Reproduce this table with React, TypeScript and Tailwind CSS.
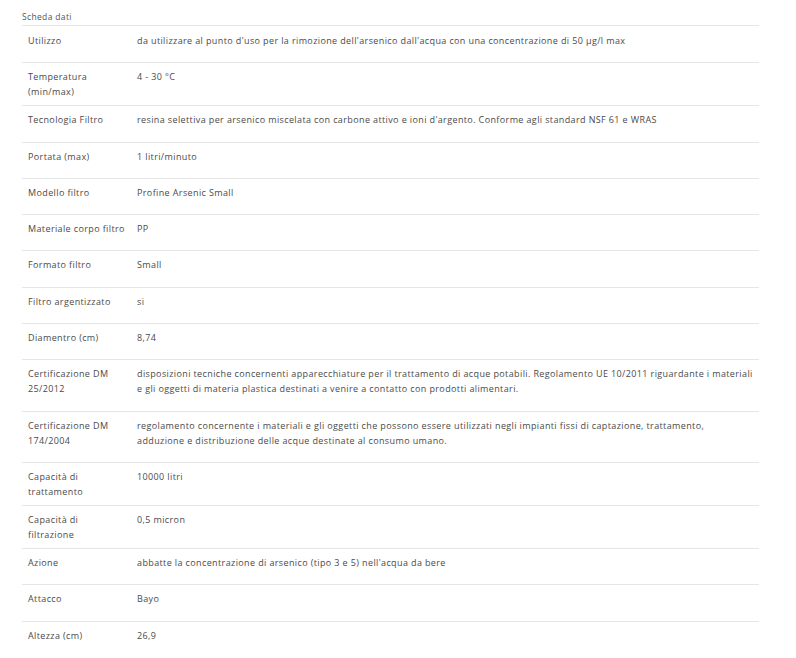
const rows: { label: string[]; value: string[] }[] = [
  { label: ['Utilizzo'], value: ["da utilizzare al punto d'uso per la rimozione dell'arsenico dall'acqua con una concentrazione di 50 µg/l max"] },
  { label: ['Temperatura', '(min/max)'], value: ['4 - 30 °C'] },
  { label: ['Tecnologia Filtro'], value: ["resina selettiva per arsenico miscelata con carbone attivo e ioni d'argento. Conforme agli standard NSF 61 e WRAS"] },
  { label: ['Portata (max)'], value: ['1 litri/minuto'] },
  { label: ['Modello filtro'], value: ['Profine Arsenic Small'] },
  { label: ['Materiale corpo filtro'], value: ['PP'] },
  { label: ['Formato filtro'], value: ['Small'] },
  { label: ['Filtro argentizzato'], value: ['si'] },
  { label: ['Diamentro (cm)'], value: ['8,74'] },
  {
    label: ['Certificazione DM', '25/2012'],
    value: [
      'disposizioni tecniche concernenti apparecchiature per il trattamento di acque potabili. Regolamento UE 10/2011 riguardante i materiali',
      'e gli oggetti di materia plastica destinati a venire a contatto con prodotti alimentari.',
    ],
  },
  {
    label: ['Certificazione DM', '174/2004'],
    value: [
      'regolamento concernente i materiali e gli oggetti che possono essere utilizzati negli impianti fissi di captazione, trattamento,',
      'adduzione e distribuzione delle acque destinate al consumo umano.',
    ],
  },
  { label: ['Capacità di', 'trattamento'], value: ['10000 litri'] },
  { label: ['Capacità di', 'filtrazione'], value: ['0,5 micron'] },
  { label: ['Azione'], value: ["abbatte la concentrazione di arsenico (tipo 3 e 5) nell'acqua da bere"] },
  { label: ['Attacco'], value: ['Bayo'] },
  { label: ['Altezza (cm)'], value: ['26,9'] },
];

export default function App() {
  return (
    <div
      className="min-h-[658px] w-[796px] bg-white pl-[22px] pt-[11px] text-[#4a4a4a]"
      style={{ fontFamily: '"Open Sans", "Liberation Sans", sans-serif' }}
    >
      {/* Section title */}
      <div className="mb-[2px] text-[8.5px] leading-[12px] tracking-[0.35px] text-[#555]">Scheda dati</div>

      {/* Data sheet table */}
      <div className="w-[737px] border-t border-[#e6e6e6]">
        {rows.map((row, i) => (
          <div
            key={row.label.join(' ')}
            className={`flex text-[9px] leading-[15px] tracking-[0.38px] ${i === 0 ? 'pt-[1px]' : ''} ${
              i < rows.length - 1 ? 'border-b border-[#e6e6e6]' : ''
            }`}
          >
            <div className="w-[115px] flex-shrink-0 py-[6px] pl-[6px]">
              {row.label.map(line => (
                <div key={line} className="whitespace-nowrap">
                  {line}
                </div>
              ))}
            </div>
            <div className="flex-1 pb-[14.3px] pt-[6px]">
              {row.value.map(line => (
                <div key={line} className="whitespace-nowrap">
                  {line}
                </div>
              ))}
            </div>
          </div>
        ))}
      </div>
    </div>
  );
}
